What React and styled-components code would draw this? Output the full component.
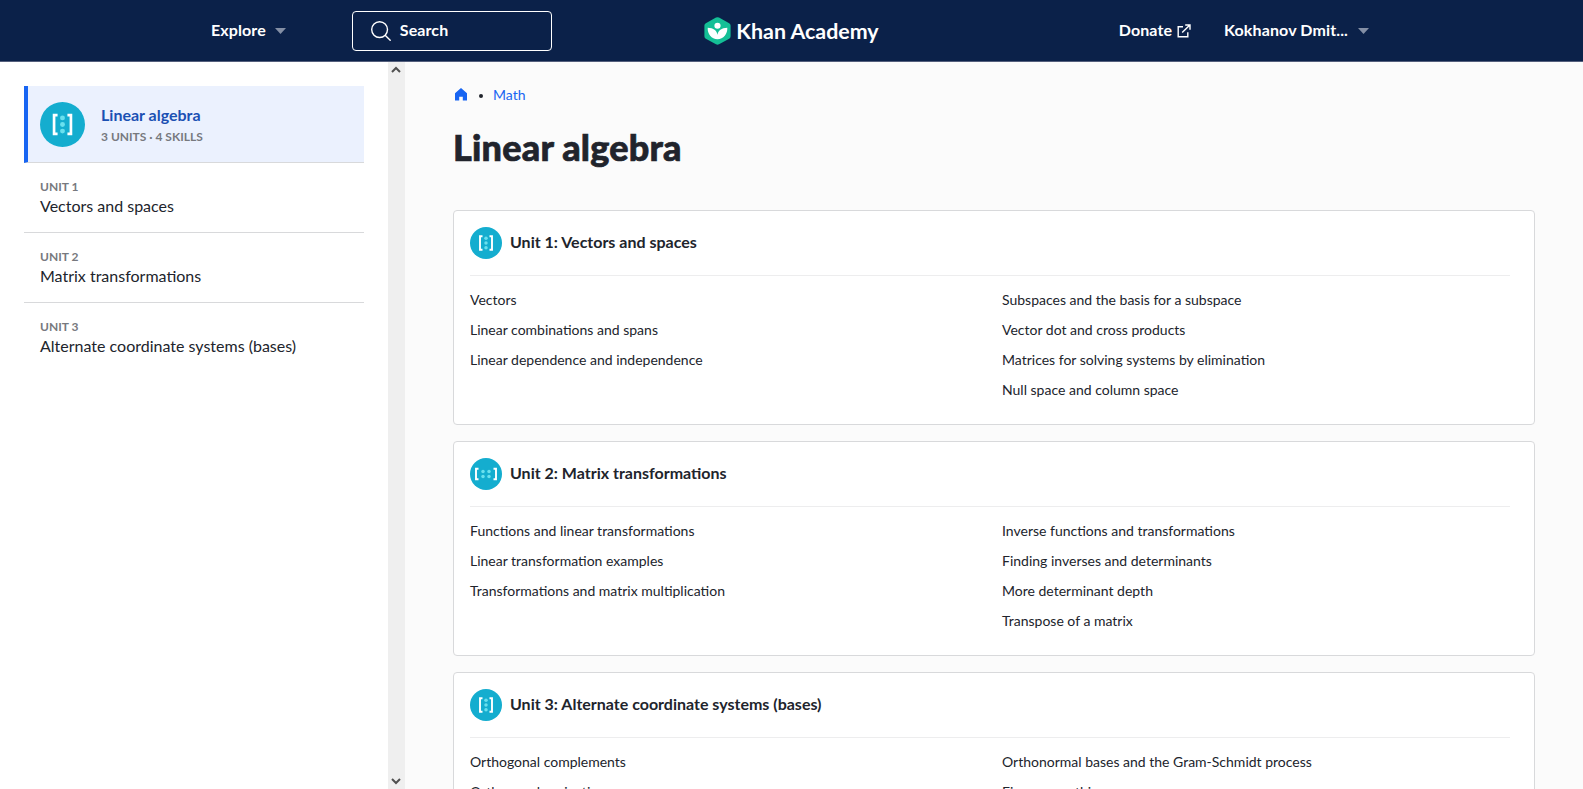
import React from "react";
import styled, { createGlobalStyle } from "styled-components";

const Global = createGlobalStyle`
  * { box-sizing: border-box; }
  html, body { margin: 0; height: 100%; overflow: hidden; }
  body { font-family: Lato, "Noto Sans", sans-serif; color: #21242c; background: #fbfbfb; }
  #root { height: 100%; }
  ul { list-style: none; margin: 0; padding: 0; }
  a { color: inherit; text-decoration: none; }
`;

const Page = styled.div`
  height: 100vh;
  display: flex;
  flex-direction: column;
  overflow: hidden;
`;

const Header = styled.header`
  flex: none;
  height: 62px;
  background: #0b2149;
  border-bottom: 1px solid #545f7c;
  color: #fff;
  display: grid;
  grid-template-columns: 1fr auto 1fr;
  align-items: center;
  padding: 0 214px 0 211px;
  font-weight: 700;
  font-size: 16px;
  line-height: 22px;
`;

const HeaderLeft = styled.div`
  display: flex;
  align-items: center;
  gap: 66px;
`;

const HeaderRight = styled.div`
  display: flex;
  align-items: center;
  justify-content: flex-end;
  gap: 33px;
`;

const Label = styled.span`
  padding-bottom: 2px;
  letter-spacing: ${(p) => (p.$track ? `${p.$track}px` : "normal")};
`;

const NavLink = styled.a`
  display: flex;
  align-items: center;
  gap: ${(p) => p.$gap}px;
  white-space: nowrap;
`;

const SearchBox = styled.div`
  width: 200px;
  height: 40px;
  border: 1px solid #fff;
  border-radius: 4px;
  display: flex;
  align-items: center;
  gap: 9px;
  padding-left: 18px;
`;

const Brand = styled.a`
  display: flex;
  align-items: center;
  gap: 5px;
  padding: 1px 0 0 3px;
  font-size: 21.4px;
  line-height: 28px;
  white-space: nowrap;
`;

const Body = styled.div`
  flex: 1;
  min-height: 0;
  display: flex;
`;

const Sidebar = styled.nav`
  flex: none;
  width: 388px;
  background: #fff;
  padding: 24px;
`;

const ScrollBar = styled.div`
  flex: none;
  width: 17px;
  background: #efefef;
  display: flex;
  flex-direction: column;
  align-items: center;
  justify-content: space-between;
  padding: 4px 1px 4px 0;
`;

const CourseItem = styled.a`
  display: flex;
  align-items: center;
  gap: 16px;
  height: 77px;
  padding: 0 12px;
  border-left: 4px solid #1865f2;
  border-bottom: 1px solid #d8d9db;
  background: #ebf1fe;
`;

const CourseText = styled.div`
  padding-top: 2px;
`;

const CourseName = styled.div`
  font-size: 16px;
  font-weight: 700;
  line-height: 20px;
  color: #1b50b3;
`;

const Eyebrow = styled.div`
  font-size: 12px;
  font-weight: 700;
  line-height: 16px;
  color: #77797e;
  margin-top: ${(p) => p.$top || 0}px;
`;

const UnitItem = styled.a`
  display: block;
  height: 70px;
  padding: 16px 16px 0;
  border-bottom: 1px solid ${(p) => (p.$last ? "transparent" : "#d8d9db")};
`;

const UnitName = styled.div`
  font-size: 16px;
  line-height: 22px;
`;

const Main = styled.main`
  flex: 1;
  min-width: 0;
  background: #fbfbfb;
  padding: 23px 48px 0;
  overflow: hidden;
`;

const Breadcrumbs = styled.div`
  display: flex;
  align-items: center;
  height: 18px;
  padding-left: 1px;
  font-size: 14px;
  color: #1865f2;
`;

const Separator = styled.span`
  width: 4px;
  height: 4px;
  border-radius: 50%;
  background: #21242c;
  margin: 4px 10px 0 11px;
`;

const Title = styled.h1`
  margin: 24px 0 43px;
  font-size: 36px;
  font-weight: 900;
  line-height: 40px;
  letter-spacing: 0.22px;
  -webkit-text-stroke: 0.7px #21242c;
`;

const Cards = styled.div`
  display: flex;
  flex-direction: column;
  gap: 16px;
`;

const Card = styled.section`
  height: 215px;
  background: #fff;
  border: 1px solid #d8d9db;
  border-radius: 4px;
  padding: 16px 24px 0 16px;
`;

const CardHead = styled.div`
  display: flex;
  align-items: center;
  gap: 8px;
  padding-bottom: 16px;
  border-bottom: 1px solid #ededee;
  font-size: 16px;
  font-weight: 700;
  line-height: 20px;
`;

const Columns = styled.div`
  display: grid;
  grid-template-columns: 1fr 1fr;
  gap: 24px;
  padding-top: 9px;
`;

const Lesson = styled.li`
  font-size: 14px;
  line-height: 18px;
  padding: 6px 0;
`;

const Caret = () => (
  <svg width="11" height="6" viewBox="0 0 11 6">
    <path d="M0 0H11L5.5 6Z" fill="#848fa5" />
  </svg>
);

const IconSvg = styled.svg`
  flex: none;
`;

const MatrixIcon = ({ size, wide }) => {
  const o = wide ? 4 : 0;
  const cols = wide ? [-3, 3] : [0];
  const rows = wide ? [-2.6, 2.6] : [-4.7, 0, 4.7];
  const h = wide ? 5.2 : 6.7;
  return (
    <IconSvg width={size} height={size} viewBox="-16 -16 32 32">
      <circle r="16" fill="#14adcf" />
      <g fill="none" stroke="#fff" strokeWidth="1.9">
        <path d={`M${-3.5 - o} ${-h}H${-6 - o}V${h}H${-3.5 - o}`} />
        <path d={`M${3.5 + o} ${-h}H${6 + o}V${h}H${3.5 + o}`} />
      </g>
      {cols.map((x) =>
        rows.map((y) => <circle key={`${x},${y}`} cx={x} cy={y} r="1.75" fill="#6ae0ee" />)
      )}
    </IconSvg>
  );
};

const SearchIcon = () => (
  <svg width="20" height="20" viewBox="0 0 20 20" fill="none" stroke="#fff" strokeWidth="1.4" strokeLinecap="round">
    <circle cx="8.6" cy="8.6" r="7.9" />
    <path d="M14.4 14.4L19.2 19.2" />
  </svg>
);

const ExternalIcon = () => (
  <svg width="14" height="14" viewBox="0 0 14 14" fill="none" stroke="#fff" strokeWidth="1.4">
    <path d="M6 2.8H1.2V12.8H10.8V8.2M5.2 8.6L12.6 1.2M8.2 1H13V5.8" />
  </svg>
);

const Leaf = () => (
  <svg width="27" height="28" viewBox="0 0 27 29" preserveAspectRatio="none">
    <path d="M12 .6Q13.5-.2 15 .6L25.2 6.4Q26.6 7.3 26.6 8.9V20Q26.6 21.6 25.2 22.5L15 28.3Q13.5 29.2 12 28.3L1.8 22.5Q.4 21.6 .4 20V8.9Q.4 7.3 1.8 6.4Z" fill="#14bf96" />
    <circle cx="13.5" cy="9" r="3.1" fill="#fff" />
    <path d="M3.7 11.2C9.5 11.2 13 14.5 13.5 18.5C14 14.5 17.5 11.2 23.3 11.2C23.7 17.5 19.5 23 13.5 23S3.3 17.5 3.7 11.2Z" fill="#fff" />
  </svg>
);

const HomeIcon = () => (
  <svg width="14" height="14" viewBox="0 0 14 14">
    <path d="M7 .9L13 6.2V13.5H8.8V9.8H5.200V13.500H1V6.200Z" fill="#1865f2" />
  </svg>
);

const Arrow = ({ down }) => (
  <svg width="10" height="7" viewBox="0 0 10 7" fill="none" stroke="#505050" strokeWidth="2">
    <path d={down ? "M1 1L5 5L9 1" : "M1 6L5 2L9 6"} />
  </svg>
);

const units = [
  {
    name: "Vectors and spaces",
    left: ["Vectors", "Linear combinations and spans", "Linear dependence and independence"],
    right: ["Subspaces and the basis for a subspace", "Vector dot and cross products", "Matrices for solving systems by elimination", "Null space and column space"],
  },
  {
    name: "Matrix transformations",
    wide: true,
    left: ["Functions and linear transformations", "Linear transformation examples", "Transformations and matrix multiplication"],
    right: ["Inverse functions and transformations", "Finding inverses and determinants", "More determinant depth", "Transpose of a matrix"],
  },
  {
    name: "Alternate coordinate systems (bases)",
    left: ["Orthogonal complements", "Orthogonal projections", "Change of basis"],
    right: ["Orthonormal bases and the Gram-Schmidt process", "Eigen-everything"],
  },
];

const LessonList = ({ items }) => (
  <ul>
    {items.map((t) => (
      <Lesson key={t}>{t}</Lesson>
    ))}
  </ul>
);

export default function App() {
  return (
    <Page>
      <Global />
      <Header>
        <HeaderLeft>
          <NavLink $gap={9}><Label $track={0.1}>Explore</Label><Caret /></NavLink>
          <SearchBox><SearchIcon /><Label $track={0.1}>Search</Label></SearchBox>
        </HeaderLeft>
        <Brand><Leaf />Khan Academy</Brand>
        <HeaderRight>
          <NavLink $gap={5}><Label $track={0.1}>Donate</Label><ExternalIcon /></NavLink>
          <NavLink $gap={10}><Label $track={0.12}>Kokhanov Dmit...</Label><Caret /></NavLink>
        </HeaderRight>
      </Header>
      <Body>
        <Sidebar>
          <CourseItem>
            <MatrixIcon size={45} />
            <CourseText>
              <CourseName>Linear algebra</CourseName>
              <Eyebrow $top={4}>3 UNITS · 4 SKILLS</Eyebrow>
            </CourseText>
          </CourseItem>
          {units.map((u, i) => (
            <UnitItem key={u.name} $last={i === units.length - 1}>
              <Eyebrow>UNIT {i + 1}</Eyebrow>
              <UnitName>{u.name}</UnitName>
            </UnitItem>
          ))}
        </Sidebar>
        <ScrollBar><Arrow /><Arrow down /></ScrollBar>
        <Main>
          <Breadcrumbs><HomeIcon /><Separator /><a>Math</a></Breadcrumbs>
          <Title>Linear algebra</Title>
          <Cards>
            {units.map((u, i) => (
              <Card key={u.name}>
                <CardHead>
                  <MatrixIcon size={32} wide={u.wide} />
                  <Label>Unit {i + 1}: {u.name}</Label>
                </CardHead>
                <Columns>
                  <LessonList items={u.left} />
                  <LessonList items={u.right} />
                </Columns>
              </Card>
            ))}
          </Cards>
        </Main>
      </Body>
    </Page>
  );
}
